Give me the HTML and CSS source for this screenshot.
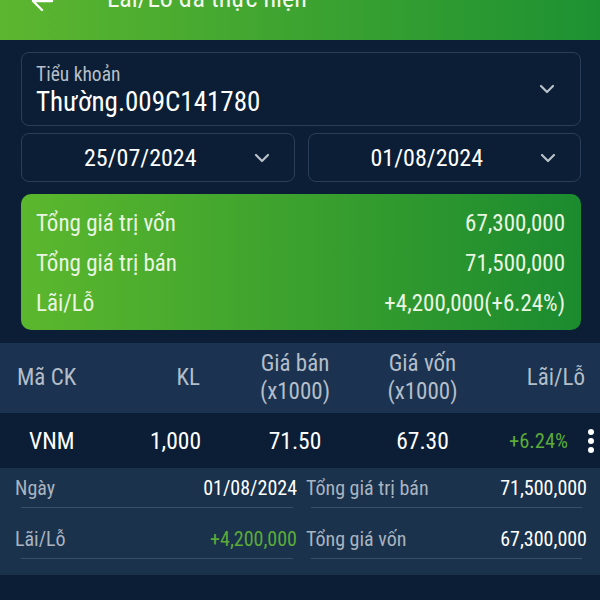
FILE: index.html
```html
<!DOCTYPE html>
<html lang="vi">
<head>
    <meta charset="UTF-8">
    <title>Lãi/Lỗ đã thực hiện</title>
    <link rel="stylesheet" href="styles.css">
</head>
<body>
    <header class="topbar">
        <svg class="back" width="24" height="24" viewBox="0 0 24 24">
            <path d="M22 12H3M12 3l-9 9 9 9" fill="none" stroke="#fff" stroke-width="2.4" stroke-linecap="round" stroke-linejoin="round"/>
        </svg>
        <h1>Lãi/Lỗ đã thực hiện</h1>
    </header>

    <div class="filters">
        <div class="select account">
            <div class="select-text">
                <div class="label">Tiểu khoản</div>
                <div class="value">Thường.009C141780</div>
            </div>
            <svg class="chevron" width="16" height="10" viewBox="0 0 16 10"><path d="M2 2l6 6 6-6" fill="none" stroke="#b9c1cb" stroke-width="2.2" stroke-linecap="round" stroke-linejoin="round"/></svg>
        </div>

        <div class="dates">
            <div class="select date">
                <span class="date-text">25/07/2024</span>
                <svg class="chevron" width="16" height="10" viewBox="0 0 16 10"><path d="M2 2l6 6 6-6" fill="none" stroke="#b9c1cb" stroke-width="2.2" stroke-linecap="round" stroke-linejoin="round"/></svg>
            </div>
            <div class="select date">
                <span class="date-text">01/08/2024</span>
                <svg class="chevron" width="16" height="10" viewBox="0 0 16 10"><path d="M2 2l6 6 6-6" fill="none" stroke="#b9c1cb" stroke-width="2.2" stroke-linecap="round" stroke-linejoin="round"/></svg>
            </div>
        </div>

        <div class="summary">
            <div class="sum-row"><span>Tổng giá trị vốn</span><span>67,300,000</span></div>
            <div class="sum-row"><span>Tổng giá trị bán</span><span>71,500,000</span></div>
            <div class="sum-row"><span>Lãi/Lỗ</span><span>+4,200,000(+6.24%)</span></div>
        </div>
    </div>

    <div class="grid head">
        <div class="c1">Mã CK</div>
        <div class="c2">KL</div>
        <div class="c3">Giá bán<br>(x1000)</div>
        <div class="c4">Giá vốn<br>(x1000)</div>
        <div class="c5">Lãi/Lỗ</div>
    </div>

    <div class="grid row">
        <div class="c1 code">VNM</div>
        <div class="c2">1,000</div>
        <div class="c3">71.50</div>
        <div class="c4">67.30</div>
        <div class="c5">
            <span class="up">+6.24%</span>
            <span class="kebab"><i></i><i></i><i></i></span>
        </div>
    </div>

    <div class="detail">
        <div class="field"><div class="field-line"><span class="k">Ngày</span><span class="v">01/08/2024</span></div></div>
        <div class="field"><div class="field-line"><span class="k">Tổng giá trị bán</span><span class="v">71,500,000</span></div></div>
        <div class="field"><div class="field-line"><span class="k">Lãi/Lỗ</span><span class="v up">+4,200,000</span></div></div>
        <div class="field"><div class="field-line"><span class="k">Tổng giá vốn</span><span class="v">67,300,000</span></div></div>
    </div>
</body>
</html>
```

FILE: styles.css
```css
* { box-sizing: border-box; }

body {
    margin: 0;
    width: 600px;
    height: 600px;
    overflow: hidden;
    background: #0b1e35;
    color: #fff;
    font-family: Roboto, "Noto Sans", sans-serif;
    font-stretch: 80%;
}

/* header (cut at the top of the shot) */
.topbar {
    height: 40px;
    display: flex;
    align-items: flex-start;
    overflow: hidden;
    background: linear-gradient(90deg, #5db62f, #1d9132);
}
.topbar .back { margin: -11px 0 0 30px; flex: none; }
.topbar h1 {
    margin: -17px 0 0 53px;
    font-size: 26px;
    line-height: 30px;
    font-weight: 400;
    color: #f2f8ee;
}

.filters { padding: 12px 19px 0 21px; }

.select {
    display: flex;
    align-items: center;
    border: 1px solid #2a3e57;
    border-radius: 8px;
}
.select .chevron { flex: none; }

.account { height: 74px; padding-left: 14px; }
.account .select-text { flex: 1; align-self: flex-start; padding-top: 11px; }
.account .label { font-size: 19.5px; line-height: 22px; color: #b6bec8; }
.account .value { font-size: 27px; line-height: 30px; margin-top: 1px; font-stretch: 77%; }
.account .chevron { margin-right: 25px; }

.dates {
    display: grid;
    grid-template-columns: 1fr 1fr;
    gap: 13px;
    margin-top: 7px;
}
.date { height: 49px; padding-left: 5px; }
.date-text { flex: 1; text-align: center; font-size: 24px; font-stretch: 77%; }
.date .chevron { margin-right: 24px; }

.summary {
    margin-top: 12px;
    height: 136px;
    padding: 9px 16px 0 15px;
    border-radius: 10px;
    background: linear-gradient(90deg, #5bb72d, #1b8b2f);
    color: #eaf6e3;
    font-size: 23px;
}
.sum-row {
    display: flex;
    justify-content: space-between;
    align-items: center;
    height: 40px;
}

/* table */
.grid {
    display: grid;
    grid-template-columns: 110px 120px 130px 125px 1fr;
    align-items: center;
}
.grid .c2 { text-align: right; padding-right: 30px; }
.grid .c3, .grid .c4 { text-align: center; }
.grid .c5 { text-align: right; }

.head {
    margin-top: 13px;
    height: 70px;
    background: #1b3350;
    color: #b4bec9;
    font-size: 23px;
    line-height: 28px;
}
.head .c1 { padding-left: 17px; }
.head .c5 { padding-right: 15px; }

.row {
    height: 55px;
    font-size: 23.5px;
    background: #0b1e35;
}
.row .c1 { padding-left: 29px; }
.row .c2 { padding-right: 29px; }
.row .c5 {
    display: flex;
    justify-content: flex-end;
    align-items: center;
    gap: 20px;
    padding-right: 6px;
}
.row .up { font-size: 20.5px; }

.up { color: #5cab38; }

.kebab { display: flex; flex-direction: column; gap: 3px; }
.kebab i { width: 6px; height: 6px; border-radius: 50%; background: #fff; }

/* expanded detail */
.detail {
    display: grid;
    grid-template-columns: 300px 300px;
    align-content: start;
    row-gap: 19px;
    height: 107px;
    padding-top: 8px;
    background: #1a324c;
    font-size: 20px;
    line-height: 24px;
}
.field {
    margin: 0 7px 0 21px;
    padding-bottom: 7px;
    border-bottom: 1px solid #394f69;
}
.field:nth-child(even) { margin: 0 18px 0 11px; }
.field-line { display: flex; justify-content: space-between; margin: 0 -4px 0 -6px; }
.field:nth-child(even) .field-line { margin: 0 -5px; }
.k { color: #a9b4c0; }
```
